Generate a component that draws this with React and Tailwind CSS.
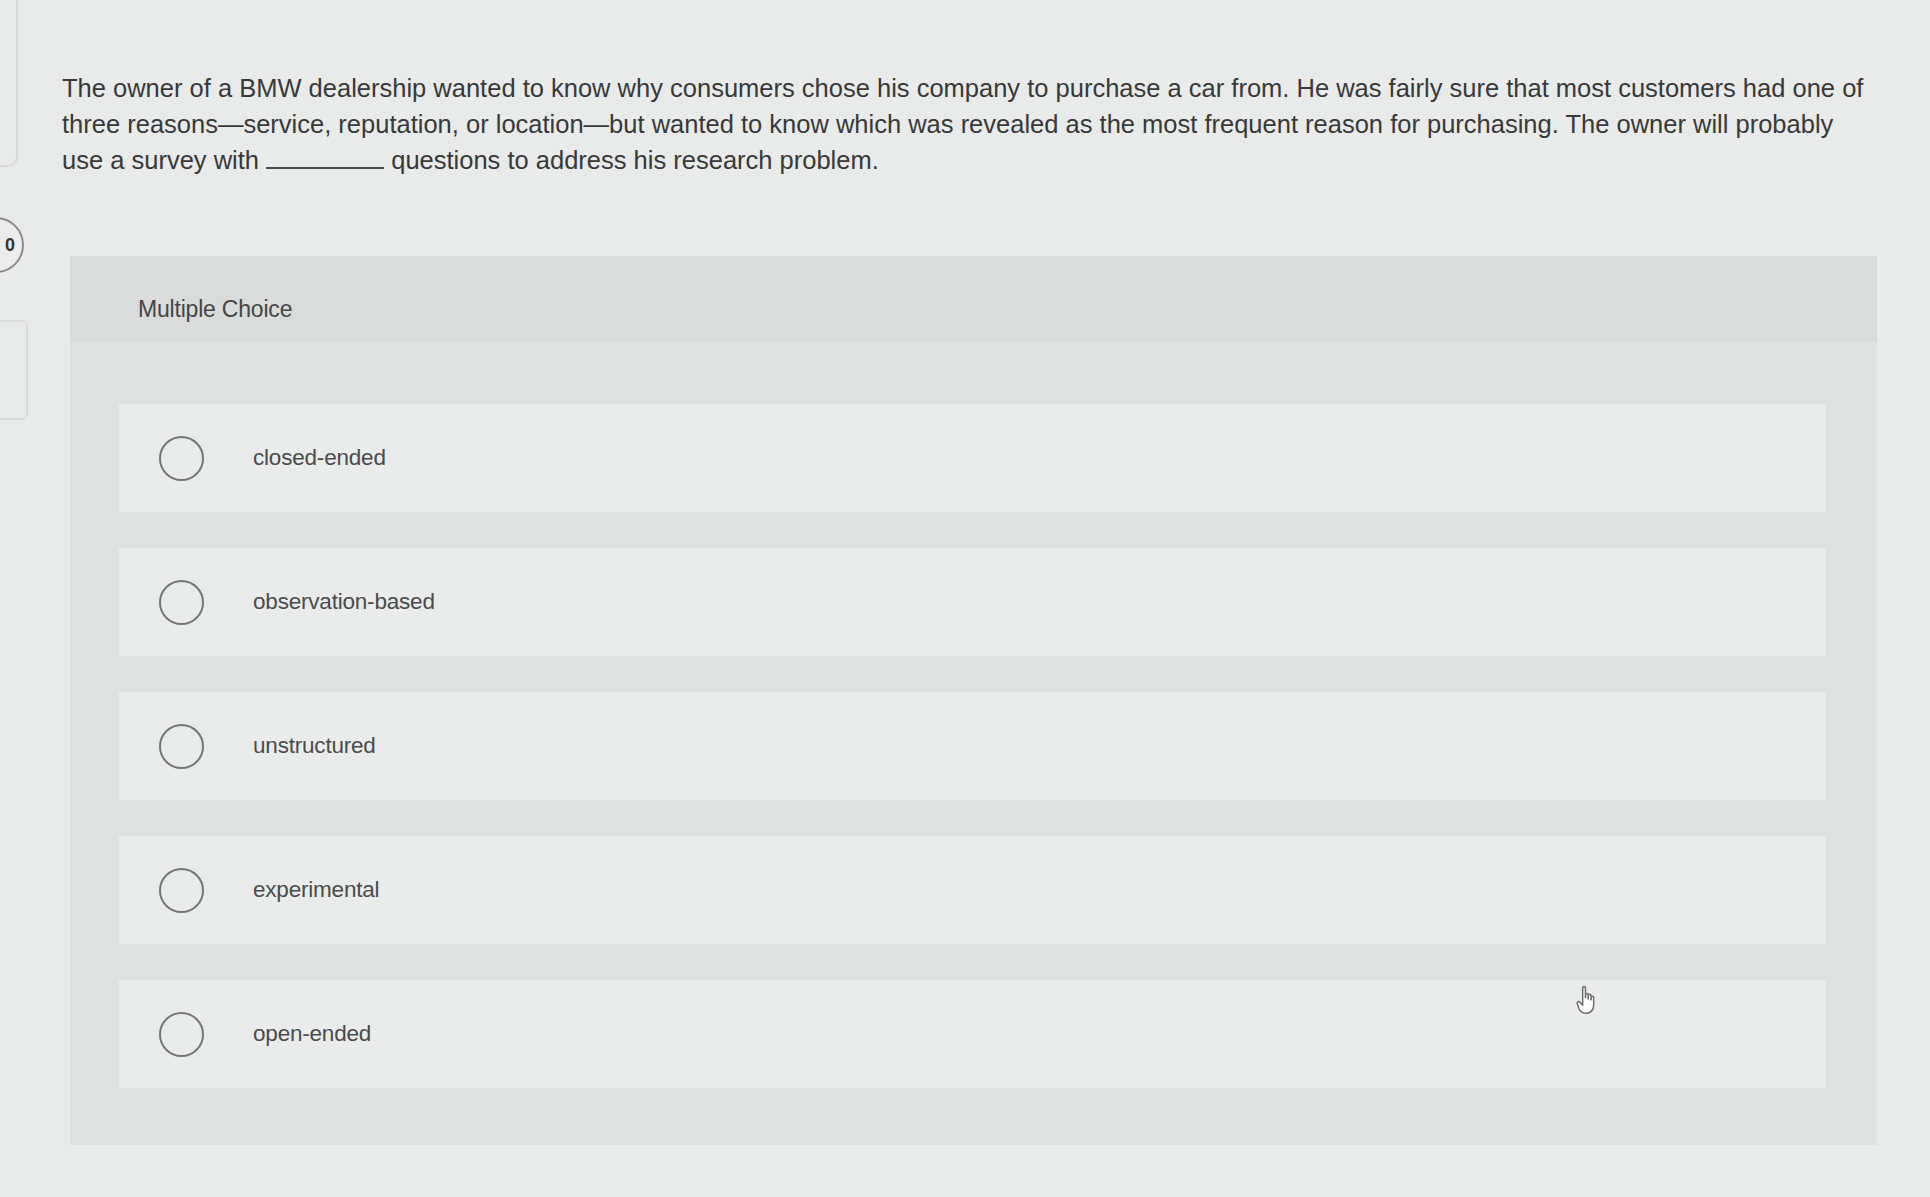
import React from "react";

function Radio() {
  return <div className="w-[45px] h-[45px] rounded-full border-2 border-[#767878] shrink-0" />;
}

function Option({ label }) {
  return (
    <div className="h-[108px] bg-[#eaebeb] flex items-center pl-[40px]">
      <Radio />
      <span className="ml-[49px] text-[22.5px] text-[#4a4b4b] tracking-[-0.2px]">{label}</span>
    </div>
  );
}

export default function App() {
  const options = ["closed-ended", "observation-based", "unstructured", "experimental", "open-ended"];
  return (
    <div
      className="w-[1930px] h-[1197px] bg-[#e9eaea] flex overflow-hidden relative"
      style={{ fontFamily: '"Liberation Sans", Arial, sans-serif' }}
    >
      {/* left gutter */}
      <div className="w-[28px] shrink-0 flex flex-col">
        <div className="w-[18px] h-[167px] border-r-2 border-b-2 border-[#d9dada] rounded-br-[10px]" />
        <div className="mt-[50px] -ml-[34px] w-[58px] h-[56px] rounded-full border-2 border-[#8a8b8b] bg-[#ececec] flex items-center justify-end pr-[7px] text-[18px] font-bold text-[#333]">
          0
        </div>
        <div className="mt-[47px] w-[28px] h-[100px] border-2 border-l-0 border-[#d9dada] rounded-r-[6px]" />
      </div>

      {/* main */}
      <div className="flex-1 flex flex-col pl-[34px] pt-[70px] pr-[20px]">
        <p className="text-[25.5px] leading-[36px] text-[#383939] whitespace-nowrap">
          The owner of a BMW dealership wanted to know why consumers chose his company to purchase a car from. He was fairly sure that most customers had one of
          <br />
          three reasons—service, reputation, or location—but wanted to know which was revealed as the most frequent reason for purchasing. The owner will probably
          <br />
          use a survey with{" "}
          <span className="inline-block w-[118px] border-b-2 border-[#4a4b4b] align-baseline" />{" "}
          questions to address his research problem.
        </p>

        <div className="mt-[78px] ml-[8px] w-[1807px] bg-[#e0e1e1] flex flex-col">
          <div className="h-[86px] bg-[#dadbdb] flex items-center pl-[68px] pt-[20px]">
            <span className="text-[23px] text-[#454646] tracking-[-0.2px]">Multiple Choice</span>
          </div>
          <div className="flex flex-col gap-[36px] pt-[62px] pb-[57px] pl-[49px] pr-[51px]">
            {options.map((o) => (
              <Option key={o} label={o} />
            ))}
          </div>
        </div>
      </div>

      {/* mouse cursor */}
      <div className="absolute left-[1574px] top-[984px]">
        <svg width="28" height="32" viewBox="0 0 26 30" fill="none">
          <path
            d="M8 3.5c0-1.4 2.6-1.4 2.6 0V13l.2-3.2c0-1.3 2.4-1.3 2.4 0V14l.2-3.4c0-1.3 2.4-1.3 2.4 0V15l.2-2.6c0-1.2 2.3-1.2 2.3 0V20c0 4.5-3 7.5-7 7.5-3.2 0-5-1.6-6.6-4L3 18.4c-.8-1.3 1-2.7 2.2-1.5L8 20V3.5z"
            fill="#ffffff"
            stroke="#6b6c6c"
            strokeWidth="1.4"
            strokeLinejoin="round"
          />
        </svg>
      </div>
    </div>
  );
}
